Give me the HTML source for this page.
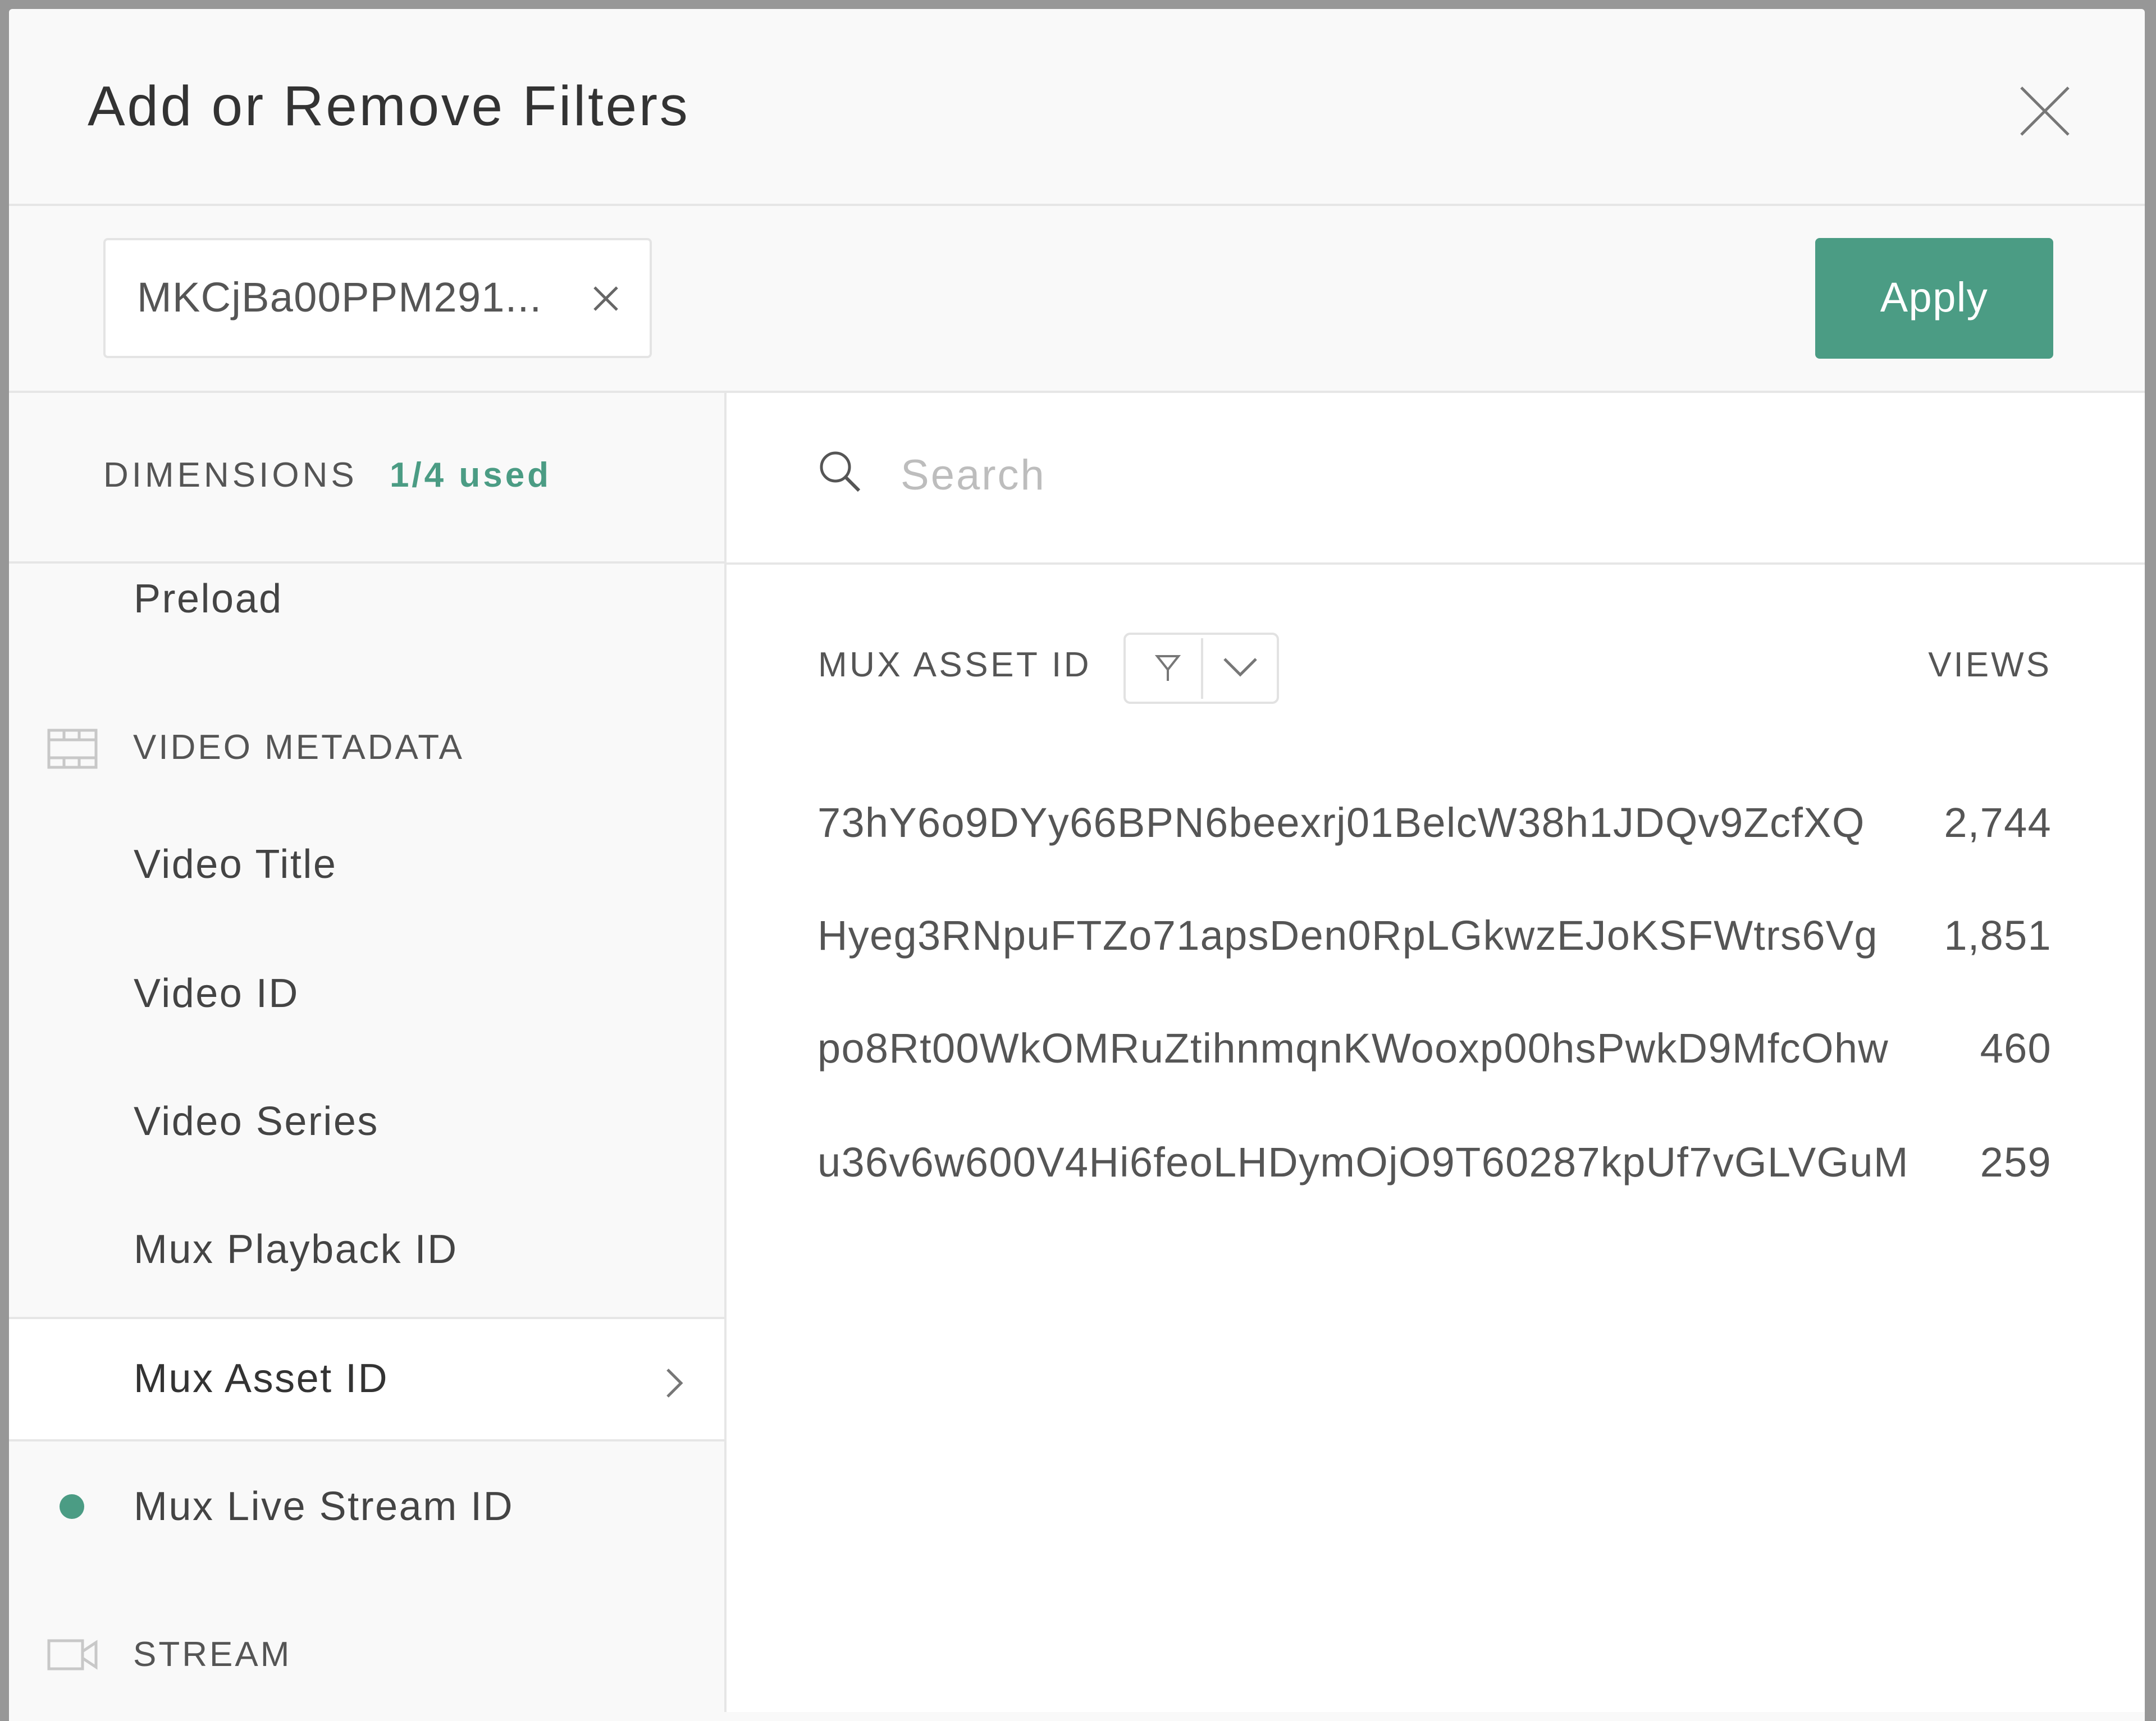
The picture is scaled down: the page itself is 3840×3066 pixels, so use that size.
<!DOCTYPE html>
<html><head><meta charset="utf-8"><style>
*{margin:0;padding:0;box-sizing:border-box}
body{width:3840px;height:3050px;background:#979797;font-family:"Liberation Sans",sans-serif;color:#333;position:relative;overflow:hidden}
.a{position:absolute;white-space:nowrap}
.modal{position:absolute;left:16px;top:16px;width:3804px;height:3050px;background:#f9f9f9;border-radius:6px 6px 0 0}
.t{line-height:1;transform:translateY(-50%)}
.lab{font-size:62px;letter-spacing:5px;color:#555}
.item{font-size:72px;color:#444;left:238px;letter-spacing:2.5px}
.row{font-size:74px;color:#555;letter-spacing:1.3px}
</style></head><body>
<div class="modal"></div>
<div class="a t" style="left:156px;top:189px;font-size:100px;color:#333;letter-spacing:3.7px">Add or Remove Filters</div>
<svg class="a" style="left:3596px;top:152px" width="92" height="92" viewBox="0 0 92 92"><path d="M4 4L88 88M88 4L4 88" stroke="#777" stroke-width="5" fill="none"/></svg>
<div class="a" style="left:16px;top:363px;width:3804px;height:4px;background:#e6e6e6"></div>
<div class="a" style="left:184px;top:424px;width:977px;height:214px;background:#fff;border:4px solid #e4e4e4;border-radius:8px"></div>
<div class="a t" style="left:244px;top:530px;font-size:74px;color:#555;letter-spacing:1.3px">MKCjBa00PPM291...</div>
<svg class="a" style="left:1055px;top:508px" width="48" height="48" viewBox="0 0 48 48"><path d="M4 4L44 44M44 4L4 44" stroke="#666" stroke-width="5"/></svg>
<div class="a" style="left:3233px;top:424px;width:424px;height:215px;background:#4b9c84;border-radius:8px"></div>
<div class="a t" style="left:3233px;top:530px;width:424px;text-align:center;font-size:74px;color:#fff;letter-spacing:1.5px">Apply</div>
<div class="a" style="left:16px;top:696px;width:3804px;height:4px;background:#e6e6e6"></div>
<div class="a" style="left:1290px;top:700px;width:2530px;height:2350px;background:#fff;border-left:4px solid #e6e6e6"></div>
<div class="a" style="left:1290px;top:1002px;width:2530px;height:4px;background:#e6e6e6"></div>
<div class="a" style="left:16px;top:1000px;width:1274px;height:4px;background:#e6e6e6"></div>
<div class="a t lab" style="left:184px;top:847px;letter-spacing:6px">DIMENSIONS <span style="color:#4b9c84;font-weight:bold;letter-spacing:5px;margin-left:34px">1/4 used</span></div>
<svg class="a" style="left:1456px;top:800px" width="80" height="80" viewBox="0 0 80 80"><circle cx="32" cy="32" r="25" stroke="#555" stroke-width="5" fill="none"/><path d="M50 50L74 74" stroke="#555" stroke-width="6"/></svg>
<div class="a t" style="left:1604px;top:847px;font-size:76px;color:#bdbdbd;letter-spacing:3px">Search</div>
<div class="a t item" style="top:1067px">Preload</div>
<svg class="a" style="left:84px;top:1298px" width="90" height="72" viewBox="0 0 90 72"><g fill="none" stroke="#c8c8c8" stroke-width="5"><rect x="3" y="3" width="84" height="66"/><path d="M3 20H87M3 52H87M30 3V20M57 3V20M30 52V69M57 52V69"/></g></svg>
<div class="a t lab" style="left:237px;top:1332px;letter-spacing:4px">VIDEO METADATA</div>
<div class="a t item" style="top:1540px">Video Title</div>
<div class="a t item" style="top:1770px">Video ID</div>
<div class="a t item" style="top:1998px">Video Series</div>
<div class="a t item" style="top:2226px">Mux Playback ID</div>
<div class="a" style="left:16px;top:2346px;width:1274px;height:222px;background:#fff;border-top:4px solid #e6e6e6;border-bottom:4px solid #e6e6e6"></div>
<div class="a t item" style="top:2456px;color:#333">Mux Asset ID</div>
<svg class="a" style="left:1183px;top:2434px" width="36" height="60" viewBox="0 0 36 60"><path d="M6 6L30 30L6 54" stroke="#777" stroke-width="5" fill="none"/></svg>
<div class="a" style="left:106px;top:2662px;width:44px;height:44px;border-radius:50%;background:#4b9c84"></div>
<div class="a t item" style="top:2684px">Mux Live Stream ID</div>
<svg class="a" style="left:84px;top:2920px" width="90" height="56" viewBox="0 0 90 56"><g fill="none" stroke="#c8c8c8" stroke-width="5"><rect x="3" y="3" width="60" height="50"/><path d="M63 22L87 6V50L63 34"/></g></svg>
<div class="a t lab" style="left:237px;top:2948px;letter-spacing:4px">STREAM</div>
<div class="a t lab" style="left:1457px;top:1185px;letter-spacing:4.5px">MUX ASSET ID</div>
<div class="a" style="left:2001px;top:1127px;width:277px;height:127px;border:4px solid #e2e2e2;border-radius:12px;background:#fff"></div>
<div class="a" style="left:2139px;top:1137px;width:4px;height:108px;background:#e2e2e2"></div>
<svg class="a" style="left:2055px;top:1165px" width="50" height="50" viewBox="0 0 50 50"><path d="M6 4H44L25 28ZM25 28V48" stroke="#777" stroke-width="4" fill="none"/></svg>
<svg class="a" style="left:2177px;top:1168px" width="64" height="40" viewBox="0 0 64 40"><path d="M4 6L32 34L60 6" stroke="#777" stroke-width="5" fill="none"/></svg>
<div class="a t lab" style="right:186px;top:1185px;letter-spacing:4px">VIEWS</div>
<div class="a t row" style="left:1456px;top:1466px">73hY6o9DYy66BPN6beexrj01BelcW38h1JDQv9ZcfXQ</div>
<div class="a t row" style="right:186px;top:1466px">2,744</div>
<div class="a t row" style="left:1456px;top:1667px">Hyeg3RNpuFTZo71apsDen0RpLGkwzEJoKSFWtrs6Vg</div>
<div class="a t row" style="right:186px;top:1667px">1,851</div>
<div class="a t row" style="left:1456px;top:1868px">po8Rt00WkOMRuZtihnmqnKWooxp00hsPwkD9MfcOhw</div>
<div class="a t row" style="right:186px;top:1868px">460</div>
<div class="a t row" style="left:1456px;top:2071px">u36v6w600V4Hi6feoLHDymOjO9T60287kpUf7vGLVGuM</div>
<div class="a t row" style="right:186px;top:2071px">259</div>
</body></html>
